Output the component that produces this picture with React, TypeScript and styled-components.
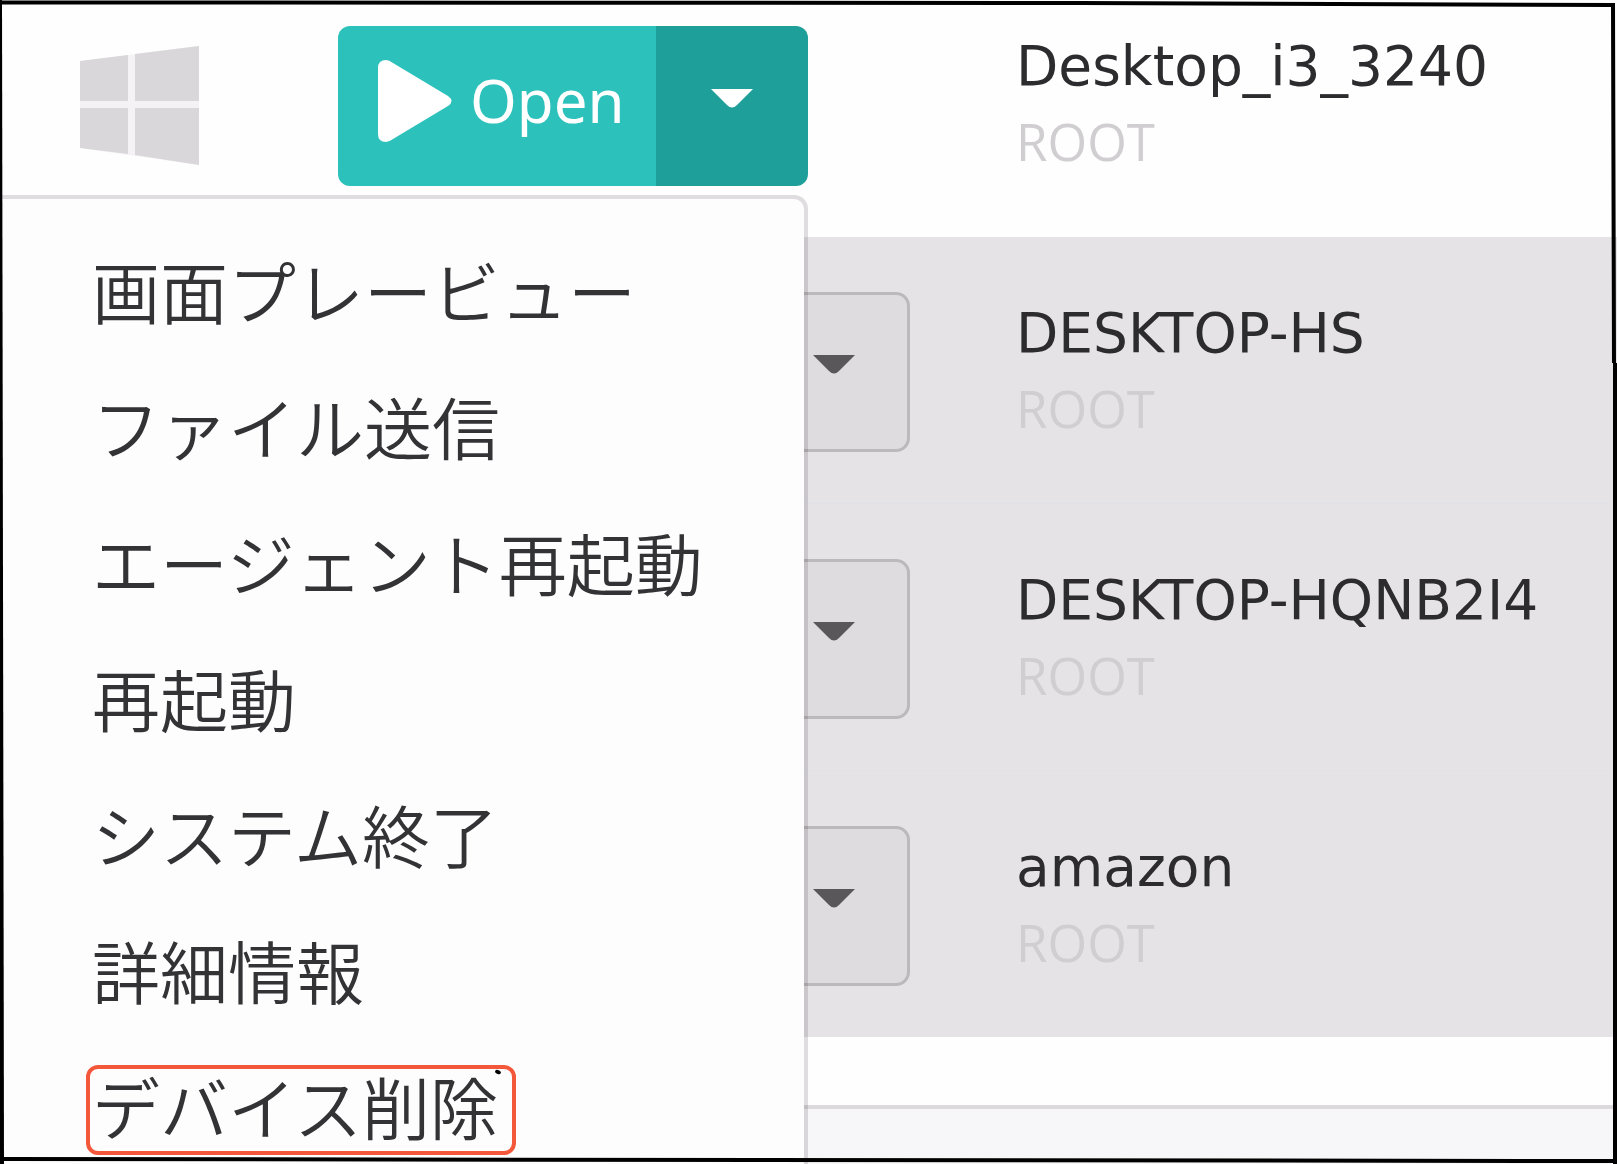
import React from "react";
import styled, { createGlobalStyle, css } from "styled-components";

const GlobalStyle = createGlobalStyle`
  *, *::before, *::after { box-sizing: border-box; }
  body { margin: 0; background: #fefdfe; }
  button { font: inherit; color: inherit; border: 0; padding: 0; background: none; cursor: pointer; }
  ul { list-style: none; margin: 0; padding: 0; }
`;

const Page = styled.main`
  position: relative;
  display: flex;
  flex-direction: column;
  height: 100vh;
  overflow: hidden;
  background: #fefefe;
  color: #2c2b2e;
  font-family: "DejaVu Sans", "Noto Sans CJK JP", sans-serif;
`;

const DeviceList = styled.ul`
  flex: none;
  margin-top: -30px;
  padding-bottom: 68px;
`;

const DeviceRow = styled.li<{ $active?: boolean }>`
  display: grid;
  grid-template-columns: 1016px 1fr;
  height: 267px;
  background: ${(p) => (p.$active ? "#fefefe" : "#e5e3e6")};
  border-bottom: 1px solid ${(p) => (p.$active ? "transparent" : "#e0e2e8")};

  &:last-child {
    height: 266px;
    border-bottom: 0;
  }
`;

const Actions = styled.div<{ $active?: boolean }>`
  display: flex;
  align-items: flex-start;
  padding: ${(p) => (p.$active ? "56px" : "55px")} 106px 0 80px;
  justify-content: ${(p) => (p.$active ? "flex-start" : "flex-end")};
  gap: 139px;
`;

const WindowsLogo = styled.svg`
  width: 119px;
  height: 119px;
  margin-top: 20px;
`;

const SplitButton = styled.div`
  display: flex;
  height: 160px;
  border-radius: 12px;
  overflow: hidden;
  color: #ffffff;
`;

const OpenButton = styled.button`
  display: flex;
  align-items: center;
  gap: 18px;
  width: 318px;
  padding: 0 0 12px 40px;
  background: #2dc1bc;
  font-family: "Noto Sans", sans-serif;
  font-size: 60px;
  line-height: 80px;
`;

const Toggle = styled.button<{ $active?: boolean }>`
  display: flex;
  align-items: center;
  justify-content: center;
  width: 152px;
  height: 160px;
  padding-bottom: 16px;
  ${(p) =>
    p.$active
      ? css`
          background: #1f9f9a;
          color: #ffffff;
        `
      : css`
          background: #dedcdf;
          color: #59575a;
          border: 3px solid #bbb9bc;
          border-radius: 14px;
        `}
`;

const Identity = styled.div`
  padding-top: 58px;
`;

const DeviceName = styled.div`
  font-size: 55px;
  line-height: 76px;
  white-space: nowrap;
`;

const DeviceGroup = styled.div`
  color: #d0ced1;
  font-family: "Open Sans", sans-serif;
  font-size: 51px;
  line-height: 74px;
`;

const Menu = styled.ul`
  position: absolute;
  z-index: 2;
  top: 195px;
  left: -16px;
  width: 824px;
  height: 100vh;
  padding: 27px 0 0 98px;
  background: #fefdfe;
  background-clip: padding-box;
  border: 4px solid rgba(60, 50, 65, 0.16);
  border-radius: 14px;
  color: #333235;
  font-family: "Noto Sans CJK JP", sans-serif;
  font-size: 68px;
  font-weight: 350;
`;

const MenuItem = styled.li`
  display: flex;
  align-items: center;
  height: 136px;
`;

const MenuButton = styled.button<{ $marked?: boolean }>`
  height: 90px;
  padding: 0 14px 8px 2px;
  line-height: 74px;
  white-space: nowrap;
  border: 4px solid ${(p) => (p.$marked ? "#f4583b" : "transparent")};
  border-radius: 12px;
`;

const Footer = styled.footer`
  flex: 1;
  background: #f7f6f9;
  border-top: 4px solid #dcdadd;
`;

const Ink = styled.svg`
  position: absolute;
  z-index: 3;
  inset: 0;
  width: 100%;
  height: 100%;
  pointer-events: none;
`;

const Caret = () => (
  <svg width="42" height="19" viewBox="0 0 42 19" aria-hidden="true">
    <path d="M0 0H42L26 16Q21 21 16 16Z" fill="currentColor" />
  </svg>
);

const Play = () => (
  <svg width="74" height="84" viewBox="0 0 74 84" aria-hidden="true">
    <path d="M0 10Q0 2 8 2Q11 2 15 5L70 38Q77 43 70 48L15 81Q11 84 8 84Q0 84 0 76Z" fill="currentColor" />
  </svg>
);

const devices = [
  { name: "Desktop_i3_3240", group: "ROOT", active: true },
  { name: "DESKTOP-HS", group: "ROOT" },
  { name: "DESKTOP-HQNB2I4", group: "ROOT" },
  { name: "amazon", group: "ROOT" },
];

const menuItems = [
  "画面プレービュー",
  "ファイル送信",
  "エージェント再起動",
  "再起動",
  "システム終了",
  "詳細情報",
  "デバイス削除",
];

export default function App() {
  return (
    <>
      <GlobalStyle />
      <Page>
        <DeviceList>
          {devices.map((d) => (
            <DeviceRow key={d.name} $active={d.active}>
              <Actions $active={d.active}>
                {d.active ? (
                  <>
                    <WindowsLogo viewBox="0 0 119 119" role="img" aria-label="Windows">
                      <path d="M0 15L119 0V119L0 102Z" fill="#f4f2f5" />
                      <path d="M0 15L48 9V55H0ZM55 8L119 0V55H55ZM0 62H48V108L0 102ZM55 62H119V119L55 109Z" fill="#d9d7da" />
                    </WindowsLogo>
                    <SplitButton>
                      <OpenButton type="button">
                        <Play />
                        Open
                      </OpenButton>
                      <Toggle type="button" $active aria-label="Open menu" aria-expanded="true">
                        <Caret />
                      </Toggle>
                    </SplitButton>
                  </>
                ) : (
                  <Toggle type="button" aria-label="Open menu">
                    <Caret />
                  </Toggle>
                )}
              </Actions>
              <Identity>
                <DeviceName>{d.name}</DeviceName>
                <DeviceGroup>{d.group}</DeviceGroup>
              </Identity>
            </DeviceRow>
          ))}
        </DeviceList>
        <Footer />
        <Menu>
          {menuItems.map((label, i) => (
            <MenuItem key={label}>
              <MenuButton type="button" $marked={i === menuItems.length - 1}>
                {label}
              </MenuButton>
            </MenuItem>
          ))}
        </Menu>
        <Ink viewBox="0 0 1617 1164" preserveAspectRatio="none" aria-hidden="true">
          <g fill="none" stroke="#000000" strokeWidth="4">
            <path d="M0 2.5L1080 3L1614 5" />
            <path d="M0 0L2 1164" />
            <path d="M1613 3L1614 363M1615 363V1164" />
            <path d="M0 1159L1617 1161" />
          </g>
          <ellipse cx="498" cy="1072" rx="3" ry="2" transform="rotate(25 498 1072)" />
        </Ink>
      </Page>
    </>
  );
}
